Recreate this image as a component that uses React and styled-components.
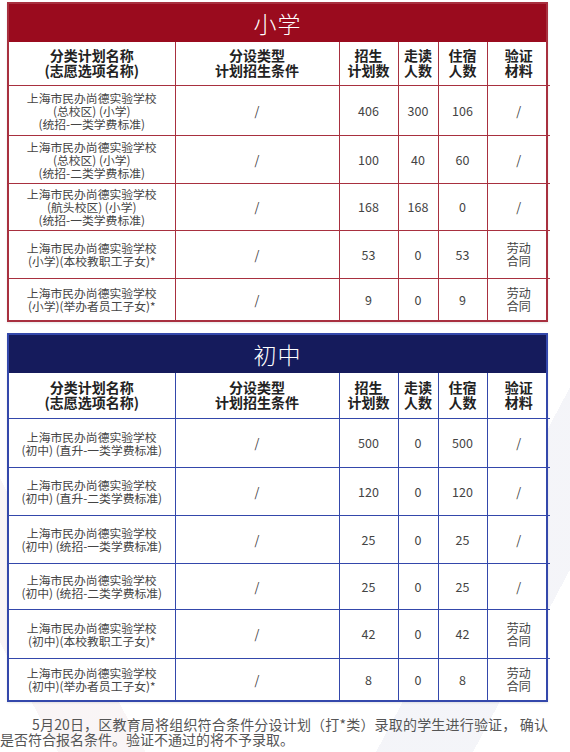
import React from "react";
import styled, { createGlobalStyle } from "styled-components";

const GlobalStyle = createGlobalStyle`
  html, body {
    margin: 0;
    padding: 0;
    background: #fff;
  }
  body {
    font-family: "Noto Sans CJK SC", "Noto Sans", sans-serif;
  }
`;

const themes = {
  red: { bar: "#9a0b1e", line: "#a8303f" },
  blue: { bar: "#151b5c", line: "#3448ab" },
};

const Page = styled.div`
  width: 570px;
  min-height: 752px;
  box-sizing: border-box;
  padding: 2px 0 0 7px;
  background:
    linear-gradient(118deg, transparent 0 80%, rgba(205, 208, 226, 0.22) 80% 90%, transparent 90%),
    linear-gradient(62deg, transparent 0 6%, rgba(236, 222, 225, 0.3) 6% 15%, transparent 15%),
    #fff;
`;

const Section = styled.div`
  width: 541px;
  border: 2px solid ${(p) => themes[p.$tone].line};
  box-sizing: border-box;
  background: #fff;
  box-shadow: 0 1px 2px rgba(0, 0, 0, 0.1);
  & + & {
    margin-top: 11px;
  }
`;

const TitleBar = styled.div`
  height: 38px;
  background: ${(p) => themes[p.$tone].bar};
  color: #fff;
  font-size: 23px;
  font-weight: 300;
  display: flex;
  align-items: center;
  justify-content: center;
  letter-spacing: 1px;
`;

const Table = styled.table`
  width: 100%;
  border-collapse: collapse;
  table-layout: fixed;

  td, th {
    border: 1px solid ${(p) => themes[p.$tone].line};
    text-align: center;
    vertical-align: middle;
    padding: 0;
    box-sizing: border-box;
  }
  tr:first-child > * {
    border-top: none;
  }
  tr:last-child > td {
    border-bottom: none;
  }
  tr > *:first-child {
    border-left: none;
  }
  tr > *:last-child {
    border-right: none;
  }
`;

const Row = styled.tr`
  height: ${(p) => p.$h}px;
`;

const HeadCell = styled.th`
  font-size: 14px;
  line-height: 15px;
  font-weight: 700;
  color: #222;
`;

const NameCell = styled.td`
  font-size: 11.8px;
  line-height: 13px;
  color: #444;
`;

const Cell = styled.td`
  font-size: 12.5px;
  color: #444;
  line-height: 13px;
`;

const Note = styled.td`
  font-size: 12px;
  line-height: 13px;
  color: #444;
`;

const Footer = styled.p`
  width: 548px;
  margin: 15px 0 0 -7px;
  font-size: 14px;
  line-height: 15px;
  color: #555;
  text-indent: 32px;
  text-align: justify;
`;

const widths = [166, 164, 59, 40, 49, 63];

const primary = [
  { name: ["上海市民办尚德实验学校", "(总校区) (小学)", "(统招-一类学费标准)"], n: [406, 300, 106], note: false, h: 50 },
  { name: ["上海市民办尚德实验学校", "(总校区) (小学)", "(统招-二类学费标准)"], n: [100, 40, 60], note: false, h: 48 },
  { name: ["上海市民办尚德实验学校", "(航头校区) (小学)", "(统招-一类学费标准)"], n: [168, 168, 0], note: false, h: 47 },
  { name: ["上海市民办尚德实验学校", "(小学)(本校教职工子女)*"], n: [53, 0, 53], note: true, h: 48 },
  { name: ["上海市民办尚德实验学校", "(小学)(举办者员工子女)*"], n: [9, 0, 9], note: true, h: 42 },
];

const junior = [
  { name: ["上海市民办尚德实验学校", "(初中) (直升-一类学费标准)"], n: [500, 0, 500], note: false, h: 49 },
  { name: ["上海市民办尚德实验学校", "(初中) (直升-二类学费标准)"], n: [120, 0, 120], note: false, h: 48 },
  { name: ["上海市民办尚德实验学校", "(初中) (统招-一类学费标准)"], n: [25, 0, 25], note: false, h: 48 },
  { name: ["上海市民办尚德实验学校", "(初中) (统招-二类学费标准)"], n: [25, 0, 25], note: false, h: 46 },
  { name: ["上海市民办尚德实验学校", "(初中)(本校教职工子女)*"], n: [42, 0, 42], note: true, h: 49 },
  { name: ["上海市民办尚德实验学校", "(初中)(举办者员工子女)*"], n: [8, 0, 8], note: true, h: 42 },
];

const Lines = ({ items }) =>
  items.map((t, i) => (
    <React.Fragment key={i}>
      {i > 0 && <br />}
      {t}
    </React.Fragment>
  ));

const heads = [
  ["分类计划名称", "(志愿选项名称)"],
  ["分设类型", "计划招生条件"],
  ["招生", "计划数"],
  ["走读", "人数"],
  ["住宿", "人数"],
  ["验证", "材料"],
];

const PlanTable = ({ title, tone, rows, headH }) => (
  <Section $tone={tone}>
    <TitleBar $tone={tone}>{title}</TitleBar>
    <Table $tone={tone}>
      <colgroup>
        {widths.map((w, i) => (
          <col key={i} style={{ width: w }} />
        ))}
      </colgroup>
      <tbody>
        <Row $h={headH}>
          {heads.map((h, i) => (
            <HeadCell key={i}>
              <Lines items={h} />
            </HeadCell>
          ))}
        </Row>
        {rows.map((r, i) => (
          <Row key={i} $h={r.h}>
            <NameCell>
              <Lines items={r.name} />
            </NameCell>
            <Cell>/</Cell>
            {r.n.map((v, j) => (
              <Cell key={j}>{v}</Cell>
            ))}
            {r.note ? (
              <Note>
                劳动
                <br />
                合同
              </Note>
            ) : (
              <Cell>/</Cell>
            )}
          </Row>
        ))}
      </tbody>
    </Table>
  </Section>
);

const App = () => (
  <>
    <GlobalStyle />
    <Page>
      <PlanTable title="小学" tone="red" rows={primary} headH={43} />
      <PlanTable title="初中" tone="blue" rows={junior} headH={45} />
      <Footer>
        5月20日，区教育局将组织符合条件分设计划（打*类）录取的学生进行验证， 确认是否符合报名条件。验证不通过的将不予录取。
      </Footer>
    </Page>
  </>
);

export default App;
